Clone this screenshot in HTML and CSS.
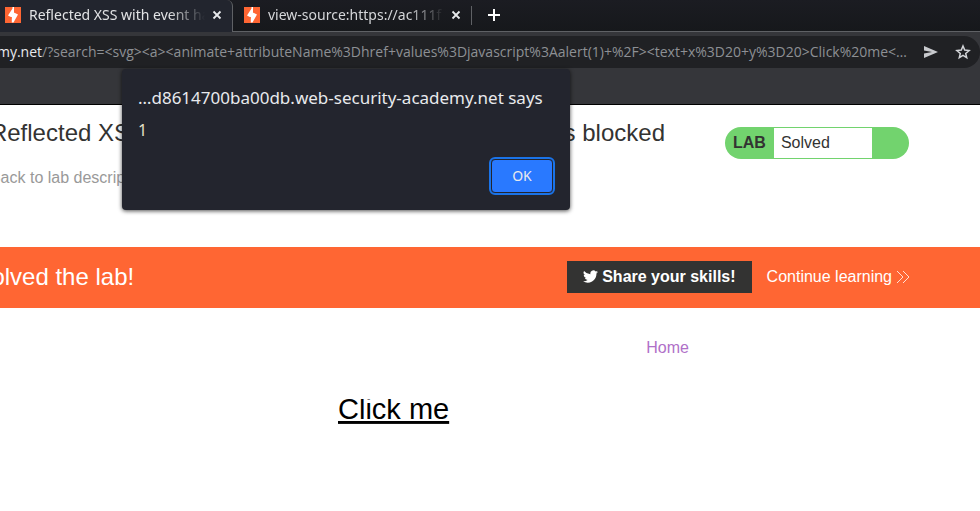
FILE: index.html
```html
<!DOCTYPE html>
<html lang="en">
<head>
<meta charset="utf-8">
<title>Reflected XSS with event handlers and href attributes blocked</title>
<link rel="stylesheet" href="styles.css">
</head>
<body>
<svg class="defs" aria-hidden="true">
  <symbol id="burp" viewBox="0 0 16 16">
    <rect width="16" height="16" fill="#ff6633"/>
    <path d="M7.500 0H9v5.500L13 7.500 8.500 15.500H6.800V10.500L3 8.500 7.500 1.500z" fill="#fff"/>
    <path d="M4 10.800h3M9 4.800h3" stroke="#ff6633"/>
  </symbol>
  <symbol id="close" viewBox="0 0 10 10">
    <path d="M1.500 1.500l7 7M8.500 1.500l-7 7" stroke="#e8eaed" stroke-width="1.800" fill="none"/>
  </symbol>
</svg>
<header class="browser">
  <nav class="tabs">
    <div class="tab active">
      <svg class="favicon"><use href="#burp"/></svg>
      <span class="tab-title">Reflected XSS with event handlers</span>
      <button class="close" aria-label="Close tab"><svg><use href="#close"/></svg></button>
    </div>
    <div class="tab">
      <svg class="favicon"><use href="#burp"/></svg>
      <span class="tab-title">view-source:https://ac111f</span>
      <button class="close" aria-label="Close tab"><svg><use href="#close"/></svg></button>
    </div>
    <button class="new-tab" aria-label="New tab"><svg viewBox="0 0 12 12"><path d="M6 0v12M0 6h12" stroke="#fff" stroke-width="2"/></svg></button>
  </nav>
  <div class="toolbar">
    <div class="omnibox">
      <div class="url"><span class="host">academy.net</span>/?search=&lt;svg&gt;&lt;a&gt;&lt;animate+attributeName%3Dhref+values%3Djavascript%3Aalert(1)+%2F&gt;&lt;text+x%3D20+y%3D20&gt;Click%20me&lt;…</div>
      <button class="send" aria-label="Send"><svg viewBox="0 0 14 12"><path d="M0 0l14 6-14 6V7.500L8 6 0 4.500z" fill="#c8cace"/></svg></button>
      <button class="star" aria-label="Bookmark"><svg viewBox="0 0 16 16"><path d="M8 2l1.700 4.100 4.400.400-3.400 2.900 1 4.300L8 11.400l-3.700 2.300 1-4.300-3.400-2.900 4.400-.400z" fill="none" stroke="#d2d4d8" stroke-width="1.500"/></svg></button>
    </div>
  </div>
</header>

<section class="alert" role="alertdialog" aria-labelledby="alert-title">
  <h2 id="alert-title">…d8614700ba00db.web-security-academy.net says</h2>
  <p>1</p>
  <div class="actions"><button class="ok">OK</button></div>
</section>

<main>
  <div class="lab-header">
    <div class="lab-title">
      <h1>Reflected XSS with event handlers and <span class="term">href</span> attributes blocked</h1>
      <a href="#lab">Back to lab description</a>
    </div>
    <div class="status"><strong>LAB</strong><span>Solved</span></div>
  </div>
  <div class="banner">
    <h4>solved the lab!</h4>
    <button class="share">
      <svg viewBox="0 0 24 24"><path fill="#fff" d="M24 4.600a10 10 0 0 1-2.800.800 5 5 0 0 0 2.200-2.700 10 10 0 0 1-3.100 1.200 4.900 4.900 0 0 0-8.400 4.500A14 14 0 0 1 1.700 3.100a4.900 4.900 0 0 0 1.500 6.600 5 5 0 0 1-2.200-.600 4.900 4.900 0 0 0 3.900 4.900 5 5 0 0 1-2.200.100 4.900 4.900 0 0 0 4.600 3.400A9.900 9.900 0 0 1 0 19.500a14 14 0 0 0 21.500-12.400A10 10 0 0 0 24 4.600z"/></svg>
      <span>Share your skills!</span>
    </button>
    <a class="continue" href="#next">Continue learning <svg viewBox="0 0 12 12"><path d="M0 0l6 6-6 6M6 0l6 6-6 6" fill="none" stroke="#fff" stroke-width=".8"/></svg></a>
  </div>
  <nav class="links"><a href="#home">Home</a></nav>
  <svg class="result"><a href="#result"><text x="20" y="20">Click me</text></a></svg>
</main>
</body>
</html>
```
FILE: styles.css
```css
* { box-sizing: border-box; }
body {
  margin: 0;
  background: #fff;
  color: #333332;
  font: 16px/20px "Liberation Sans", Arial, sans-serif;
  overflow: hidden;
}
button { border: 0; padding: 0; background: none; font: inherit; color: inherit; }
a { text-decoration: none; }
svg { display: block; flex: none; }
h1, h2, h4, p { margin: 0; font-weight: 400; }
.defs { position: absolute; width: 0; height: 0; }

.browser { font-family: "Noto Sans", sans-serif; font-size: 14px; overflow: hidden; }
.tabs { display: flex; height: 32px; background: linear-gradient(#1b1c22, #16181b); }
.tab {
  display: flex;
  align-items: center;
  width: 239px;
  padding: 0 11px 2px;
  color: #d5d6d9;
  border-bottom: 1px solid #5f6165;
}
.tab.active {
  width: 233px;
  padding: 0 10px 2px 5px;
  color: #e2e3e5;
  background: #22252e;
  border-bottom: 0;
  border-right: 1px solid #5f6165;
  border-radius: 0 6px 0 0;
}
.favicon { width: 16px; height: 16px; margin-right: 8px; }
.tab-title {
  flex: 1;
  min-width: 0;
  overflow: hidden;
  white-space: nowrap;
  mask-image: linear-gradient(90deg, #000 calc(100% - 36px), transparent);
}
.close { margin-left: 7px; }
.close svg { width: 10px; height: 10px; }
.new-tab { flex: 1; padding: 0 16px 2px; border-bottom: 1px solid #5f6165; }
.new-tab svg { width: 12px; height: 12px; }
.tab + .tab { background: linear-gradient(#5f6165, #5f6165) right 6px / 1px 19px no-repeat; }
.toolbar { padding: 4px 0 36px; background: #35363a; border-bottom: 1px solid #000; }
.omnibox {
  display: flex;
  align-items: center;
  justify-content: flex-end;
  height: 32px;
  padding-right: 9px;
  background: #202124;
  border-radius: 0 16px 16px 0;
}
.url { flex: none; color: #8d9094; font-family: "Open Sans", "Noto Sans", sans-serif; white-space: nowrap; }
.host { color: #e8eaed; }
.send { margin-left: 17px; }
.send svg { width: 14px; height: 12px; }
.star { margin-left: 17px; }
.star svg { width: 16px; height: 16px; }

.alert {
  position: absolute;
  top: 69px;
  left: 122px;
  width: 448px;
  padding: 16px;
  color: #e8eaed;
  background: #23252e;
  border-radius: 4px;
  box-shadow: 0 1px 4px rgba(0, 0, 0, .7);
  font-family: "Noto Sans", sans-serif;
}
.alert h2 { font-size: 17px; line-height: 26px; white-space: nowrap; }
.alert p { margin-top: 8px; font-size: 16px; line-height: 22px; color: #e5e0c8; }
.actions { display: flex; justify-content: flex-end; margin: 18px 0 1px; }
.ok {
  width: 62px;
  height: 34px;
  margin-right: 1px;
  border: 1px solid #23252e;
  border-radius: 4px;
  outline: 2px solid #1a73e8;
  background: #2979ff;
  font-size: 14px;
}

.lab-header {
  display: flex;
  justify-content: flex-end;
  gap: 60px;
  height: 142px;
  padding: 13px 71px 0 0;
}
.lab-title { flex: none; white-space: nowrap; }
.lab-title h1 { font-size: 24px; line-height: 30px; }
.term { margin: 0 8px; }
.lab-title a { display: block; margin-top: 20px; color: #999; }
.status {
  display: flex;
  flex: none;
  width: 184px;
  height: 32px;
  margin-top: 9px;
  padding: 1px 37px 1px 8px;
  background: #72d36e;
  border-radius: 16px;
  line-height: 30px;
}
.status span { flex: 1; margin-left: 8px; padding-left: 7px; background: #fff; }
.banner {
  display: flex;
  align-items: center;
  justify-content: flex-end;
  height: 61px;
  padding: 0 71px 2px 0;
  color: #fff;
  background: #ff6633;
  white-space: nowrap;
}
.banner h4 { margin-right: 433px; font-size: 24px; line-height: 30px; }
.share {
  display: flex;
  align-items: center;
  flex: none;
  gap: 4px;
  height: 32px;
  padding: 0 16px;
  background: #333332;
  font-weight: 700;
}
.share svg { width: 15px; height: 15px; }
.continue { display: flex; flex: none; align-items: center; gap: 5px; margin-left: 15px; color: #fff; }
.continue svg { width: 12px; height: 12px; overflow: visible; }
.links { padding: 30px 291px 0 0; text-align: right; }
.links a { color: #b070c8; }
.result { width: 300px; height: 112px; margin: 41px 0 0 318px; overflow: hidden; }
.result text { font-size: 29px; text-decoration: underline; fill: #000; }
```
